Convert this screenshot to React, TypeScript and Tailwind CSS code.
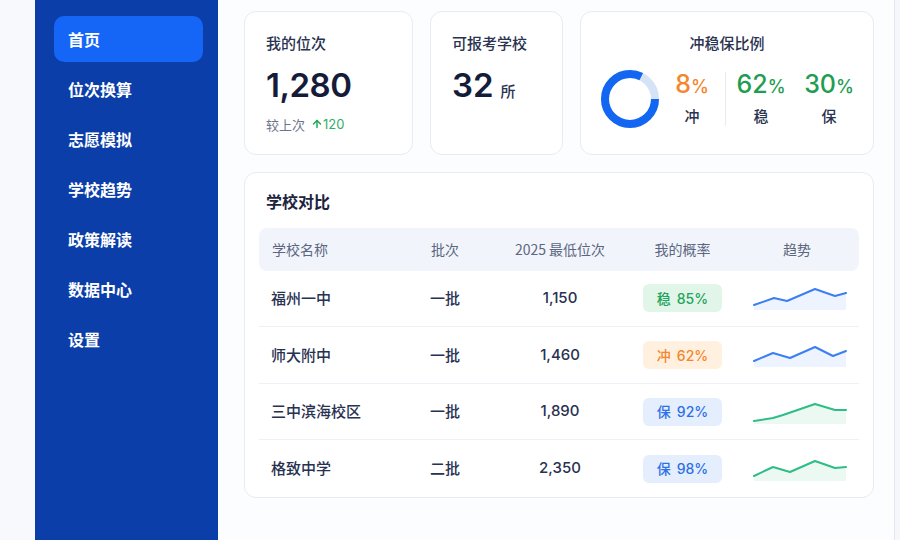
import { ArrowUp } from "lucide-react";

const navItems = ["首页", "位次换算", "志愿模拟", "学校趋势", "政策解读", "数据中心", "设置"];

type Row = {
    name: string;
    batch: string;
    rank: string;
    tag: string;
    prob: string;
    tone: "green" | "orange" | "blue";
    line: "blue" | "green";
    points: string;
};

const rows: Row[] = [
    { name: "福州一中", batch: "一批", rank: "1,150", tag: "稳", prob: "85%", tone: "green", line: "blue", points: "1,19 21,12 34,15 62,3 82,10 93,7" },
    { name: "师大附中", batch: "一批", rank: "1,460", tag: "冲", prob: "62%", tone: "orange", line: "blue", points: "1,18 20,10 37,15 62,4 80,13 93,8" },
    { name: "三中滨海校区", batch: "一批", rank: "1,890", tag: "保", prob: "92%", tone: "blue", line: "green", points: "1,21 20,18 30,15 62,4 82,10 93,10" },
    { name: "格致中学", batch: "二批", rank: "2,350", tag: "保", prob: "98%", tone: "blue", line: "green", points: "1,19 20,10 37,15 62,4 82,11 93,10" },
];

const badgeTone = {
    green: "bg-[#e2f5e9] text-[#23a35c]",
    orange: "bg-[#fff0df] text-[#f5862c]",
    blue: "bg-[#e4eefd] text-[#2e6fe6]",
};

function Sparkline({ points, color }: { points: string; color: "blue" | "green" }) {
    const stroke = color === "blue" ? "#3b7ff2" : "#2ebd84";
    const fill = color === "blue" ? "#e6efff" : "#e3f6ec";
    return (
        <svg width="94" height="24" viewBox="0 0 94 24">
            <polygon points={`${points} 93,24 1,24`} fill={fill} opacity="0.7" />
            <polyline points={points} fill="none" stroke={stroke} strokeWidth="2" strokeLinejoin="round" strokeLinecap="round" />
        </svg>
    );
}

function Donut() {
    return (
        <svg width="60" height="60" viewBox="0 0 60 60">
            <circle cx="30" cy="30" r="25" fill="none" stroke="#d6e2f5" strokeWidth="8" />
            <circle cx="30" cy="30" r="25" fill="none" stroke="#1266f1" strokeWidth="8" strokeDasharray="128.7 157.1" />
        </svg>
    );
}

export default function App() {
    return (
        <div className="flex h-[540px] w-[900px] overflow-hidden bg-[#f5f7fb] font-['Noto_Sans_CJK_SC',sans-serif]">
            <div className="w-[35px] bg-[#f7f9fc]" />

            {/* sidebar */}
            <aside className="flex w-[183px] flex-col gap-1 bg-[#0b3ea8] pl-[19px] pr-[15px] pt-4">
                {navItems.map((item, i) => (
                    <div
                        key={item}
                        className={`flex h-[46px] items-center rounded-[10px] pl-[14px] text-[16px] font-semibold text-white ${i === 0 ? "bg-[#1565f6]" : ""}`}
                    >
                        {item}
                    </div>
                ))}
            </aside>

            {/* main */}
            <main className="mr-[5px] flex flex-1 flex-col gap-[17px] border-r border-[#e2e8f2] bg-[#fcfdff] pl-[26px] pr-[20px] pt-[11px]">
                <div className="flex gap-[17px]">
                    <div className="flex h-[144px] w-[169px] flex-col rounded-xl border border-[#e6ecf5] bg-white pl-[21px] pt-[20px]">
                        <div className="text-[15px] font-medium text-[#2a3350]">我的位次</div>
                        <div className="mt-[8px] font-['Inter',sans-serif] text-[33px] font-semibold leading-[44px] tracking-[-0.5px] text-[#141c3a]">1,280</div>
                        <div className="mt-[8px] flex items-center text-[13px] text-[#6b7489]">
                            较上次
                            <ArrowUp className="ml-[6px] h-[12px] w-[12px] text-[#22a85a]" strokeWidth={3} />
                            <span className="font-['Inter',sans-serif] text-[#2fae68]">120</span>
                        </div>
                    </div>

                    <div className="flex h-[144px] w-[133px] flex-col rounded-xl border border-[#e6ecf5] bg-white pl-[21px] pt-[20px]">
                        <div className="text-[15px] font-medium text-[#2a3350]">可报考学校</div>
                        <div className="mt-[8px] flex items-baseline gap-[7px]">
                            <span className="font-['Inter',sans-serif] text-[33px] font-semibold leading-[44px] text-[#141c3a]">32</span>
                            <span className="text-[15px] font-medium text-[#2a3350]">所</span>
                        </div>
                    </div>

                    <div className="flex h-[144px] flex-1 flex-col items-center rounded-xl border border-[#e6ecf5] bg-white pt-[20px]">
                        <div className="text-[15px] font-medium text-[#2a3350]">冲稳保比例</div>
                        <div className="mt-[14px] flex w-full items-center pl-[19px]">
                            <Donut />
                            <div className="ml-[7px] flex w-[50px] flex-col items-center">
                                <div className="font-['Inter',sans-serif] text-[25px] font-medium leading-[30px] text-[#f5862c]">
                                    8<span className="text-[18px]">%</span>
                                </div>
                                <div className="mt-[3px] text-[15px] font-medium text-[#2a3350]">冲</div>
                            </div>
                            <div className="ml-[8px] h-[54px] w-px bg-[#e6ebf3]" />
                            <div className="ml-[10px] flex w-[50px] flex-col items-center">
                                <div className="font-['Inter',sans-serif] text-[25px] font-medium leading-[30px] text-[#1f9e52]">
                                    62<span className="text-[18px]">%</span>
                                </div>
                                <div className="mt-[3px] text-[15px] font-medium text-[#2a3350]">稳</div>
                            </div>
                            <div className="ml-[18px] flex w-[50px] flex-col items-center">
                                <div className="font-['Inter',sans-serif] text-[25px] font-medium leading-[30px] text-[#1f9e52]">
                                    30<span className="text-[18px]">%</span>
                                </div>
                                <div className="mt-[3px] text-[15px] font-medium text-[#2a3350]">保</div>
                            </div>
                        </div>
                    </div>
                </div>

                {/* table */}
                <div className="flex h-[326px] flex-col rounded-xl border border-[#e6ecf5] bg-white px-[14px] pt-[16px]">
                    <div className="pl-[7px] text-[16px] font-bold text-[#1c2440]">学校对比</div>
                    <div className="mt-[15px] grid h-[43px] grid-cols-[141px_90px_140px_105px_1fr] items-center rounded-lg bg-[#f1f5fb] text-[14px] text-[#5d6680]">
                        <div className="pl-[13px]">学校名称</div>
                        <div className="text-center">批次</div>
                        <div className="text-center">2025 最低位次</div>
                        <div className="text-center">我的概率</div>
                        <div className="text-center">趋势</div>
                    </div>
                    {rows.map((r, i) => (
                        <div
                            key={r.name}
                            className={`grid h-[57px] grid-cols-[141px_90px_140px_105px_1fr] items-center text-[15px] font-medium text-[#283150] ${i < rows.length - 1 ? "border-b border-[#edf1f7]" : ""}`}
                        >
                            <div className="pl-[12px]">{r.name}</div>
                            <div className="text-center">{r.batch}</div>
                            <div className="text-center font-['Inter',sans-serif] text-[15px]">{r.rank}</div>
                            <div className="flex justify-center">
                                <span className={`flex h-[28px] w-[79px] items-center justify-center gap-[6px] rounded-md text-[14px] font-medium ${badgeTone[r.tone]}`}>
                                    {r.tag}
                                    <span className="font-['Inter',sans-serif]">{r.prob}</span>
                                </span>
                            </div>
                            <div className="flex justify-center pl-[6px]">
                                <Sparkline points={r.points} color={r.line} />
                            </div>
                        </div>
                    ))}
                </div>
            </main>
        </div>
    );
}
